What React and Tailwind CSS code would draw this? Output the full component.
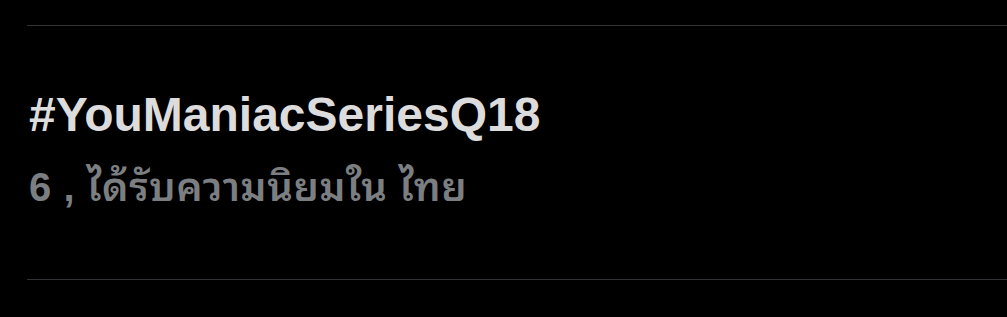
import React from 'react';

export default function App() {
  return (
    <div className="w-[1007px] h-[317px] bg-black pt-[25px] pl-[27px] overflow-hidden" style={{ fontFamily: '"Liberation Sans", "Noto Sans Thai Looped", "Noto Sans Thai", "Noto Sans", sans-serif' }}>
      <div className="border-t border-b border-[#2f3336] pt-[61px] pb-[68px] pl-[2px]">
        <div className="text-[48px] leading-[56px] h-[56px] font-bold text-[#dcdcdc] whitespace-nowrap">#YouManiacSeriesQ18</div>
        <div className="mt-[20px] text-[40px] leading-[48px] h-[48px] font-semibold tracking-[0.6px] text-[#7c7f82] whitespace-nowrap">6 , ได้รับความนิยมใน ไทย</div>
      </div>
    </div>
  );
}
